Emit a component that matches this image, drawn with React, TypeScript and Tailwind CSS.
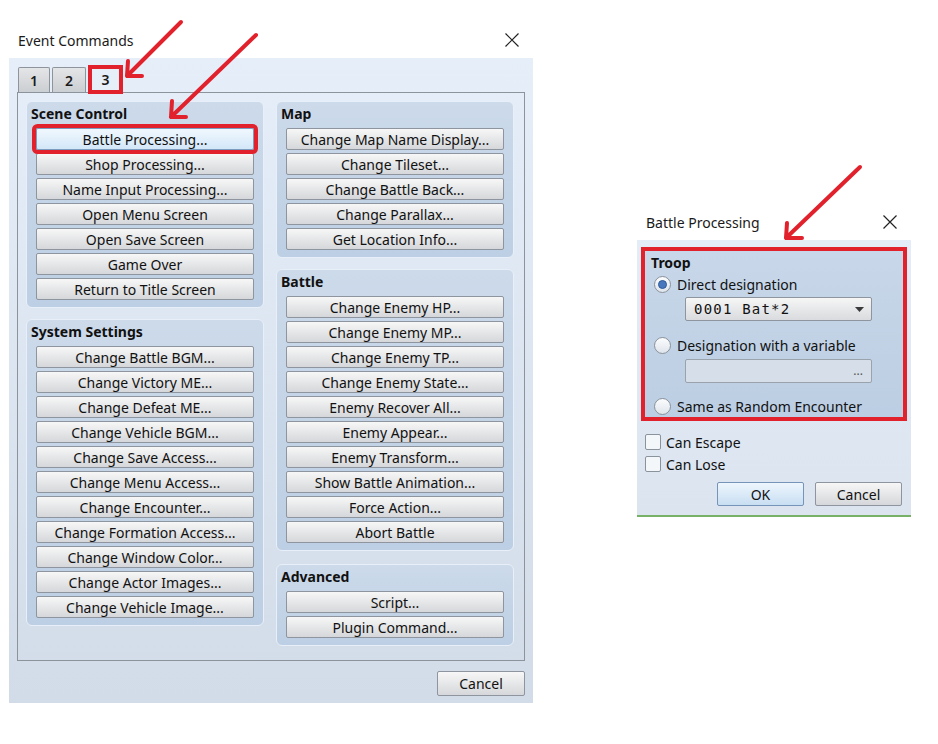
import React from "react";

const sceneControl = [
  "Battle Processing...",
  "Shop Processing...",
  "Name Input Processing...",
  "Open Menu Screen",
  "Open Save Screen",
  "Game Over",
  "Return to Title Screen",
];

const systemSettings = [
  "Change Battle BGM...",
  "Change Victory ME...",
  "Change Defeat ME...",
  "Change Vehicle BGM...",
  "Change Save Access...",
  "Change Menu Access...",
  "Change Encounter...",
  "Change Formation Access...",
  "Change Window Color...",
  "Change Actor Images...",
  "Change Vehicle Image...",
];

const mapCommands = [
  "Change Map Name Display...",
  "Change Tileset...",
  "Change Battle Back...",
  "Change Parallax...",
  "Get Location Info...",
];

const battleCommands = [
  "Change Enemy HP...",
  "Change Enemy MP...",
  "Change Enemy TP...",
  "Change Enemy State...",
  "Enemy Recover All...",
  "Enemy Appear...",
  "Enemy Transform...",
  "Show Battle Animation...",
  "Force Action...",
  "Abort Battle",
];

const advanced = ["Script...", "Plugin Command..."];

const CloseIcon = () => (
  <svg width="14" height="14" viewBox="0 0 14 14" className="text-[#222]">
    <path d="M0.5 0.5 L13.5 13.5 M13.5 0.5 L0.5 13.5" stroke="currentColor" strokeWidth="1.2" fill="none" />
  </svg>
);

interface CmdButtonProps {
  label: string;
  marked?: boolean;
}

const CmdButton: React.FC<CmdButtonProps> = ({ label, marked }) => (
  <div
    className={
      marked
        ? "relative z-10 flex h-[22px] w-full items-center justify-center rounded-[2px] border border-[#7b9bbf] bg-linear-to-b from-[#f1f8fe] to-[#d3e7f8] text-[14px] text-[#111] ring-4 ring-[#e1212c]"
        : "flex h-[22px] w-full items-center justify-center rounded-[2px] border border-[#8e959e] bg-linear-to-b from-[#f7f7f7] to-[#d5d7da] text-[14px] text-[#111]"
    }
  >
    {label}
  </div>
);

interface GroupProps {
  title: string;
  items: string[];
  markFirst?: boolean;
  className?: string;
}

const Group: React.FC<GroupProps> = ({ title, items, markFirst, className }) => (
  <div className={`rounded-[6px] border border-[#e8eff8] bg-linear-to-b from-[#ccdaea] to-[#bdcfe4] pb-[7px] ${className ?? ""}`}>
    <div className="flex h-[22px] items-center pl-[4px] text-[14px] font-bold text-[#111]">{title}</div>
    <div className="mt-[4px] flex flex-col gap-[3px] px-[9px]">
      {items.map((it, i) => (
        <CmdButton key={it} label={it} marked={markFirst && i === 0} />
      ))}
    </div>
  </div>
);

const Radio = ({ checked }: { checked?: boolean }) => (
  <div className="flex h-[17px] w-[17px] items-center justify-center rounded-full border border-[#8a929c] bg-linear-to-b from-[#fbfcfd] to-[#dfe5ec]">
    {checked && <div className="h-[9px] w-[9px] rounded-full border border-[#2f5a9a] bg-[#4a78bd]" />}
  </div>
);

const Checkbox = () => (
  <div className="h-[16px] w-[16px] rounded-[2px] border border-[#8a929c] bg-[#f4f7fa]" />
);

const EventCommands = () => (
  <div className="ml-[9px] mt-[22px] w-[524px]">
    <div className="flex h-[36px] items-center justify-between pl-[9px] pr-[14px] text-[14px] text-[#1a1a1a]">
      <span>Event Commands</span>
      <CloseIcon />
    </div>
    <div className="h-[645px] bg-linear-to-b from-[#e5eef9] to-[#d2dce8] px-[8px] pt-[9px]">
      <div className="ml-[1px] flex h-[25px] items-end gap-[2px]">
        <div className="flex h-[25px] w-[32px] items-center justify-center rounded-t-[2px] border border-b-0 border-[#8d949c] bg-linear-to-b from-[#e4e5e7] to-[#cbced2] text-[14px] font-semibold text-[#1a1a1a]">1</div>
        <div className="flex h-[25px] w-[34px] items-center justify-center rounded-t-[2px] border border-b-0 border-[#8d949c] bg-linear-to-b from-[#e4e5e7] to-[#cbced2] text-[14px] font-semibold text-[#1a1a1a]">2</div>
        <div className="relative z-10 -mb-[2px] flex h-[29px] w-[35px] items-center justify-center bg-[#e6eef8] text-[14px] font-semibold text-[#1a1a1a] ring-4 ring-inset ring-[#e1212c]">3</div>
      </div>
      <div className="flex h-[569px] gap-[12px] border border-[#8c939b] p-[8px]">
        <div className="flex w-[238px] flex-col gap-[11px]">
          <Group title="Scene Control" items={sceneControl} markFirst />
          <Group title="System Settings" items={systemSettings} />
        </div>
        <div className="flex w-[238px] flex-col gap-[11px]">
          <Group title="Map" items={mapCommands} />
          <Group title="Battle" items={battleCommands} />
          <Group title="Advanced" items={advanced} className="mt-[2px]" />
        </div>
      </div>
      <div className="mt-[10px] flex justify-end">
        <div className="flex h-[25px] w-[88px] items-center justify-center rounded-[2px] border border-[#8e959e] bg-linear-to-b from-[#f7f7f7] to-[#d5d7da] text-[14px] text-[#111]">Cancel</div>
      </div>
    </div>
  </div>
);

const BattleProcessing = () => (
  <div className="ml-[104px] mt-[204px] w-[274px]">
    <div className="flex h-[36px] items-center justify-between pl-[9px] pr-[14px] text-[14px] text-[#1a1a1a]">
      <span>Battle Processing</span>
      <CloseIcon />
    </div>
    <div className="h-[277px] border-b-2 border-[#77b168] bg-linear-to-b from-[#e3ecf7] to-[#dbe4ef] pt-[7px] text-[14px] text-[#111]">
      <div className="mx-[4px] h-[174px] border-4 border-[#e1212c] bg-linear-to-b from-[#c8d7e9] to-[#bccee3] pl-[6px]">
        <div className="flex h-[20px] items-center pt-[2px] font-bold">Troop</div>
        <div className="mt-[3px] flex h-[20px] items-center gap-[6px] pl-[3px]">
          <Radio checked />
          <span>Direct designation</span>
        </div>
        <div className="ml-[34px] mt-[3px] flex h-[24px] w-[187px] items-center justify-between rounded-[2px] border border-[#8e959e] bg-linear-to-b from-[#f6f6f6] to-[#d9dbde] pl-[8px] pr-[7px]">
          <span className="text-[14px] tracking-[1.2px] [font-family:'DejaVu_Sans_Mono',monospace]">0001 Bat*2</span>
          <svg width="9" height="5" viewBox="0 0 9 5">
            <path d="M0 0 H9 L4.5 5 Z" fill="#3a3a3a" />
          </svg>
        </div>
        <div className="mt-[14px] flex h-[20px] items-center gap-[6px] pl-[3px]">
          <Radio />
          <span>Designation with a variable</span>
        </div>
        <div className="ml-[34px] mt-[4px] flex h-[24px] w-[187px] items-center justify-end rounded-[2px] border border-[#9aa2ac] bg-[#d5dee9] pr-[8px] text-[12px] text-[#555]">
          ...
        </div>
        <div className="mt-[13px] flex h-[20px] items-center gap-[6px] pl-[3px]">
          <Radio />
          <span>Same as Random Encounter</span>
        </div>
      </div>
      <div className="mt-[11px] flex h-[20px] items-center gap-[5px] pl-[8px]">
        <Checkbox />
        <span>Can Escape</span>
      </div>
      <div className="mt-[2px] flex h-[20px] items-center gap-[5px] pl-[8px]">
        <Checkbox />
        <span>Can Lose</span>
      </div>
      <div className="mt-[8px] flex justify-end gap-[11px] pr-[9px]">
        <div className="flex h-[24px] w-[87px] items-center justify-center rounded-[2px] border border-[#7594b8] bg-linear-to-b from-[#eef6fd] to-[#c8def2]">OK</div>
        <div className="flex h-[24px] w-[87px] items-center justify-center rounded-[2px] border border-[#8e959e] bg-linear-to-b from-[#f7f7f7] to-[#d5d7da]">Cancel</div>
      </div>
    </div>
  </div>
);

const Arrows = () => (
  <svg className="pointer-events-none absolute inset-0 z-20" width="938" height="744" viewBox="0 0 938 744">
    <g stroke="#e1212c" strokeWidth="4" strokeLinecap="round" fill="none">
      <path d="M181 22 L127 76 M127 76 L128 61 M127 76 L142 76" />
      <path d="M256 35 L171 117 M171 117 L172 101 M171 117 L186 117" />
      <path d="M860 167 L786 238 M786 238 L787 223 M786 238 L802 238" />
    </g>
  </svg>
);

const App = () => (
  <div className="relative flex h-[744px] w-[938px] items-start overflow-hidden bg-white [font-family:'Noto_Sans',sans-serif]">
    <EventCommands />
    <BattleProcessing />
    <Arrows />
  </div>
);

export default App;
